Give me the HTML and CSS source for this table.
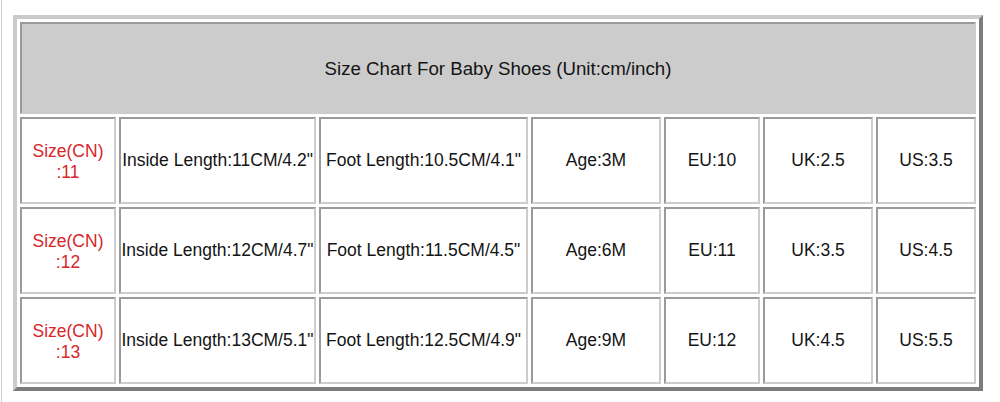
FILE: index.html
```html
<!DOCTYPE html>
<html>
<head>
<meta charset="utf-8">
<link rel="stylesheet" href="styles.css">
</head>
<body>
<div class="page">
<table class="chart">
  <tr>
    <td class="head" colspan="7">Size Chart For Baby Shoes (Unit:cm/inch)</td>
  </tr>
  <tr>
    <td class="c1 red">Size(CN)<br>:11</td>
    <td class="c2">Inside Length:11CM/4.2"</td>
    <td class="c3">Foot Length:10.5CM/4.1"</td>
    <td class="c4">Age:3M</td>
    <td class="c5">EU:10</td>
    <td class="c6">UK:2.5</td>
    <td class="c7">US:3.5</td>
  </tr>
  <tr>
    <td class="c1 red">Size(CN)<br>:12</td>
    <td class="c2">Inside Length:12CM/4.7"</td>
    <td class="c3">Foot Length:11.5CM/4.5"</td>
    <td class="c4">Age:6M</td>
    <td class="c5">EU:11</td>
    <td class="c6">UK:3.5</td>
    <td class="c7">US:4.5</td>
  </tr>
  <tr>
    <td class="c1 red">Size(CN)<br>:13</td>
    <td class="c2">Inside Length:13CM/5.1"</td>
    <td class="c3">Foot Length:12.5CM/4.9"</td>
    <td class="c4">Age:9M</td>
    <td class="c5">EU:12</td>
    <td class="c6">UK:4.5</td>
    <td class="c7">US:5.5</td>
  </tr>
</table>
</div>
</body>
</html>
```
FILE: styles.css
```css
html, body {
  margin: 0;
  padding: 0;
  background: #ffffff;
}
.page {
  margin-left: 1px;
  border-left: 1px solid #cfcfcf;
  height: 402px;
  box-sizing: border-box;
  padding: 15px 0 0 11px;
}
.chart {
  border-collapse: separate;
  border-spacing: 3px;
  border-style: solid;
  border-width: 4px;
  border-top-color: #cbcbcb;
  border-left-color: #cbcbcb;
  border-right-color: #7c7c7c;
  border-bottom-color: #7c7c7c;
  font-family: "Liberation Sans", Arial, sans-serif;
  font-size: 17.5px;
  color: #141414;
  table-layout: fixed;
}
.chart td {
  box-sizing: border-box;
  border-style: solid;
  border-width: 2px;
  border-top-color: #9a9a9a;
  border-left-color: #9a9a9a;
  border-right-color: #cccccc;
  border-bottom-color: #cccccc;
  text-align: center;
  vertical-align: middle;
  padding: 0 0 1px 0;
  height: 87px;
  white-space: nowrap;
  line-height: 21px;
}
.chart td.red {
  padding: 3px 0 0 0;
}
.chart td.head {
  background: #cccccc;
  height: 92px;
  padding: 1px 0 0 0;
  font-size: 18.7px;
}
.c1 { width: 96px; }
.c2 { width: 197px; }
.c3 { width: 209px; }
.c4 { width: 130px; }
.c5 { width: 96px; }
.c6 { width: 110px; }
.c7 { width: 100px; }
.red {
  color: #d8262a;
}
```
